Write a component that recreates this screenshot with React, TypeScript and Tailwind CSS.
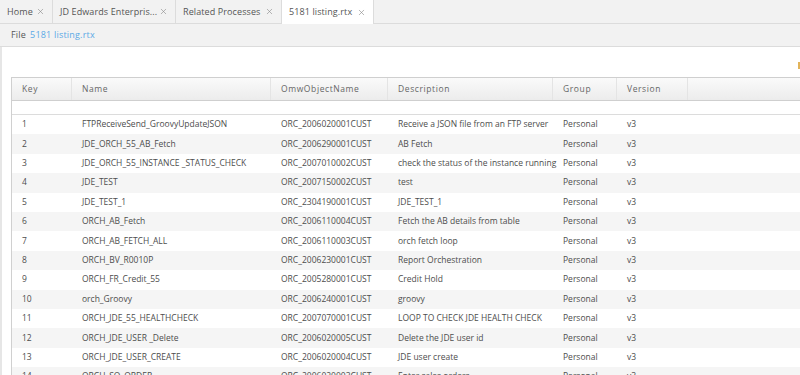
import { X } from 'lucide-react';

const tabs = [
  { label: 'Home', width: 'w-[53px]' },
  { label: 'JD Edwards Enterpris...', width: 'w-[123px]' },
  { label: 'Related Processes', width: 'w-[106px]' },
  { label: '5181 listing.rtx', width: 'w-[92px]', active: true },
];

const rows = [
  ['1', 'FTPReceiveSend_GroovyUpdateJSON', 'ORC_2006020001CUST', 'Receive a JSON file from an FTP server'],
  ['2', 'JDE_ORCH_55_AB_Fetch', 'ORC_2006290001CUST', 'AB Fetch'],
  ['3', 'JDE_ORCH_55_INSTANCE _STATUS_CHECK', 'ORC_2007010002CUST', 'check the status of the instance running'],
  ['4', 'JDE_TEST', 'ORC_2007150002CUST', 'test'],
  ['5', 'JDE_TEST_1', 'ORC_2304190001CUST', 'JDE_TEST_1'],
  ['6', 'ORCH_AB_Fetch', 'ORC_2006110004CUST', 'Fetch the AB details from table'],
  ['7', 'ORCH_AB_FETCH_ALL', 'ORC_2006110003CUST', 'orch fetch loop'],
  ['8', 'ORCH_BV_R0010P', 'ORC_2006230001CUST', 'Report Orchestration'],
  ['9', 'ORCH_FR_Credit_55', 'ORC_2005280001CUST', 'Credit Hold'],
  ['10', 'orch_Groovy', 'ORC_2006240001CUST', 'groovy'],
  ['11', 'ORCH_JDE_55_HEALTHCHECK', 'ORC_2007070001CUST', 'LOOP TO CHECK JDE HEALTH CHECK'],
  ['12', 'ORCH_JDE_USER _Delete', 'ORC_2006020005CUST', 'Delete the JDE user id'],
  ['13', 'ORCH_JDE_USER_CREATE', 'ORC_2006020004CUST', 'JDE user create'],
  ['14', 'ORCH_SO_ORDER', 'ORC_2006020003CUST', 'Enter sales orders'],
];

const cols = 'grid grid-cols-[60px_199px_117px_165px_64px_71px_1fr]';

export default function App() {
  return (
    <div className="w-[800px] h-[375px] overflow-hidden bg-white text-[#4d4d4d] font-['Open_Sans',sans-serif] text-[8.5px]">
      {/* tabs */}
      <div className="flex h-[24px] bg-[#f2f2f2] border-b border-[#dcdcdc]">
        {tabs.map((t) => (
          <div
            key={t.label}
            className={`${t.width} flex items-center justify-between pl-[7px] pr-[7px] border-r border-[#dcdcdc] text-[9px] tracking-[0.1px] ${t.active ? 'bg-white h-[24px]' : ''}`}
          >
            <span className="whitespace-nowrap text-[#555]">{t.label}</span>
            <X className="w-[9px] h-[9px] text-[#888] shrink-0" strokeWidth={1.6} />
          </div>
        ))}
      </div>

      {/* file bar */}
      <div className="h-[23px] flex items-center pl-[11px] bg-[#f2f2f2] border-b border-[#dcdcdc] text-[9px] tracking-[0.2px]">
        <span className="text-[#555]">File</span>
        <span className="ml-[4px] text-[#5aa9e6]">5181 listing.rtx</span>
      </div>

      {/* content */}
      <div className="relative border-l-2 border-[#e6e6e6] h-full pl-[9px] pt-[30px]">
        <div className="absolute right-0 top-[15px] w-[2px] h-[7px] bg-[#e2b45a]" />
        <div className="w-[820px] border-l border-[#d0d0d0]">
          <div className={`${cols} h-[24px] items-center border-y border-[#cfcfcf] bg-gradient-to-b from-[#fafafa] to-[#ececec] text-[#666] tracking-[0.6px]`}>
            <div className="pl-[10px] border-r border-[#e4e4e4] h-full flex items-center">Key</div>
            <div className="pl-[10px] border-r border-[#e4e4e4] h-full flex items-center">Name</div>
            <div className="pl-[10px] border-r border-[#e4e4e4] h-full flex items-center">OmwObjectName</div>
            <div className="pl-[10px] border-r border-[#e4e4e4] h-full flex items-center">Description</div>
            <div className="pl-[10px] border-r border-[#e4e4e4] h-full flex items-center">Group</div>
            <div className="pl-[10px] border-r border-[#e4e4e4] h-full flex items-center">Version</div>
            <div />
          </div>
          <div className="h-[14px] border-b border-[#dcdcdc]" />
          {rows.map((r, i) => (
            <div
              key={r[0]}
              className={`${cols} h-[19.4px] items-center ${i % 2 === 1 ? 'bg-[#f5f5f5]' : 'bg-white'}`}
            >
              <div className="pl-[10px]">{r[0]}</div>
              <div className="pl-[10px] whitespace-nowrap">{r[1]}</div>
              <div className="pl-[10px] whitespace-nowrap">{r[2]}</div>
              <div className="pl-[10px] whitespace-nowrap">{r[3]}</div>
              <div className="pl-[10px]">Personal</div>
              <div className="pl-[10px]">v3</div>
              <div />
            </div>
          ))}
        </div>
      </div>
    </div>
  );
}
